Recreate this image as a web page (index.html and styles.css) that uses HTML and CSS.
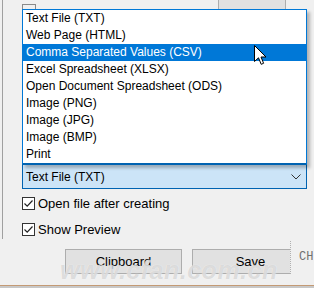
FILE: index.html
```html
<!DOCTYPE html>
<html lang="en">
<head>
    <meta charset="UTF-8">
    <meta name="viewport" content="width=device-width, initial-scale=1.0">
    <title>Export</title>
    <link rel="stylesheet" href="styles.css">
</head>
<body>

<div class="dialog">
    <div class="group">
        <div class="top-row">
            <span class="tab-stub"></span>
            <span class="btn-stub"></span>
        </div>

        <ul class="list">
            <li>Text File (TXT)</li>
            <li>Web Page (HTML)</li>
            <li class="selected">Comma Separated Values (CSV)</li>
            <li>Excel Spreadsheet (XLSX)</li>
            <li>Open Document Spreadsheet (ODS)</li>
            <li>Image (PNG)</li>
            <li>Image (JPG)</li>
            <li>Image (BMP)</li>
            <li>Print</li>
        </ul>

        <div class="combo">
            <span>Text File (TXT)</span>
            <svg class="chevron" width="10" height="6" viewBox="0 0 10 6">
                <path d="M0.5 0.5 L5 5 L9.5 0.5" fill="none" stroke="#333" stroke-width="1"/>
            </svg>
        </div>

        <label class="check">
            <span class="box"><svg width="11" height="11" viewBox="0 0 11 11"><path d="M1.5 5.5 L4.2 8.2 L9.5 2.5" fill="none" stroke="#222" stroke-width="1.2"/></svg></span>
            Open file after creating
        </label>
        <label class="check">
            <span class="box"><svg width="11" height="11" viewBox="0 0 11 11"><path d="M1.5 5.5 L4.2 8.2 L9.5 2.5" fill="none" stroke="#222" stroke-width="1.2"/></svg></span>
            Show Preview
        </label>
    </div>

    <div class="buttons">
        <button>Clipboard</button>
        <button>Save</button>
    </div>

    <div class="bottom-bar"></div>

    <!-- cosas encima del dialogo -->
    <div class="ime">CH</div>
    <div class="watermark">www.cfan.com.cn</div>
    <svg class="cursor" width="13" height="21" viewBox="0 0 13 21">
        <path d="M0.5 0.5 L0.5 16.5 L4.5 12.8 L7.2 19.3 L9.6 18.3 L7 12 L12 12 Z" fill="#fff" stroke="#000" stroke-width="1"/>
    </svg>
</div>

</body>
</html>
```

FILE: styles.css
```css
body {
    margin: 0;
    padding: 0;
    background-color: #f0f0f0;
    font-family: "Liberation Sans", Arial, sans-serif;
    font-size: 12px;
    color: #000;
}

.dialog {
    position: relative;
    width: 314px;
    height: 288px;
    overflow: hidden;
}

.group {
    margin-left: 2px;
    padding-left: 19px;
    border-left: 1px solid #a0a0a0;
    height: 239px;
    width: 285px;
}

.top-row {
    height: 9px;
    display: flex;
    align-items: flex-end;
}

.tab-stub {
    width: 12px;
    height: 4px;
    border: 1px solid #8a8a8a;
    border-bottom: none;
    background-color: #f0f0f0;
}

.btn-stub {
    margin-left: 182px;
    width: 66px;
    height: 12px;
    margin-bottom: -3px;
    border: 1px solid #adadad;
    background-color: #e1e1e1;
}

/* lista desplegada */
.list {
    position: relative;
    z-index: 2;
    list-style: none;
    margin: 0;
    padding: 0;
    height: 153px;
    border: 1px solid #0078d7;
    border-bottom-width: 2px;
    border-bottom-color: #0063b1;
    background-color: #fff;
    box-shadow: 3px 3px 3px rgba(0, 0, 0, 0.25);
}

.list li {
    height: 17px;
    line-height: 17px;
    padding-left: 3px;
    white-space: nowrap;
}

.list li.selected {
    background-color: #0078d7;
    color: #fff;
}

.combo {
    height: 23px;
    border: 1px solid #0063b1;
    border-top: none;
    background-color: #cce4f7;
    display: flex;
    align-items: center;
    justify-content: space-between;
    padding: 0 5px 0 3px;
}

.chevron {
    display: block;
}

.check {
    display: flex;
    align-items: center;
    height: 13px;
    margin-top: 8px;
    gap: 3px;
    font-size: 13px;
}

.check + .check {
    margin-top: 13px;
}

.box {
    width: 11px;
    height: 11px;
    border: 1px solid #333;
    background-color: #fff;
    display: flex;
}

.buttons {
    display: flex;
    gap: 10px;
    margin-top: 10px;
    padding-left: 65px;
}

.buttons button {
    width: 117px;
    height: 25px;
    background-color: #e1e1e1;
    border: 1px solid #adadad;
    font-family: inherit;
    font-size: 13px;
    color: #000;
    padding: 0;
}

.bottom-bar {
    margin-top: 11px;
    height: 2px;
    border-top: 1px solid #c49a74;
    background-color: #c8c8c8;
}

.ime {
    position: absolute;
    left: 290px;
    top: 241px;
    width: 24px;
    height: 33px;
    border-left: 1px dotted #b0b0b0;
    background-color: #f0f0f0;
    font-family: "Liberation Mono", monospace;
    font-size: 12px;
    color: #707070;
    line-height: 33px;
    padding-left: 8px;
    box-sizing: border-box;
}

.watermark {
    position: absolute;
    left: 60px;
    top: 256px;
    font-family: "Liberation Sans", sans-serif;
    font-size: 25px;
    font-weight: bold;
    font-style: italic;
    letter-spacing: 0.5px;
    color: rgba(175, 175, 175, 0.42);
    text-shadow: 0 0 1px rgba(255, 255, 255, 0.9);
    white-space: nowrap;
    pointer-events: none;
}

.cursor {
    position: absolute;
    left: 254px;
    top: 45px;
    z-index: 3;
}
```
